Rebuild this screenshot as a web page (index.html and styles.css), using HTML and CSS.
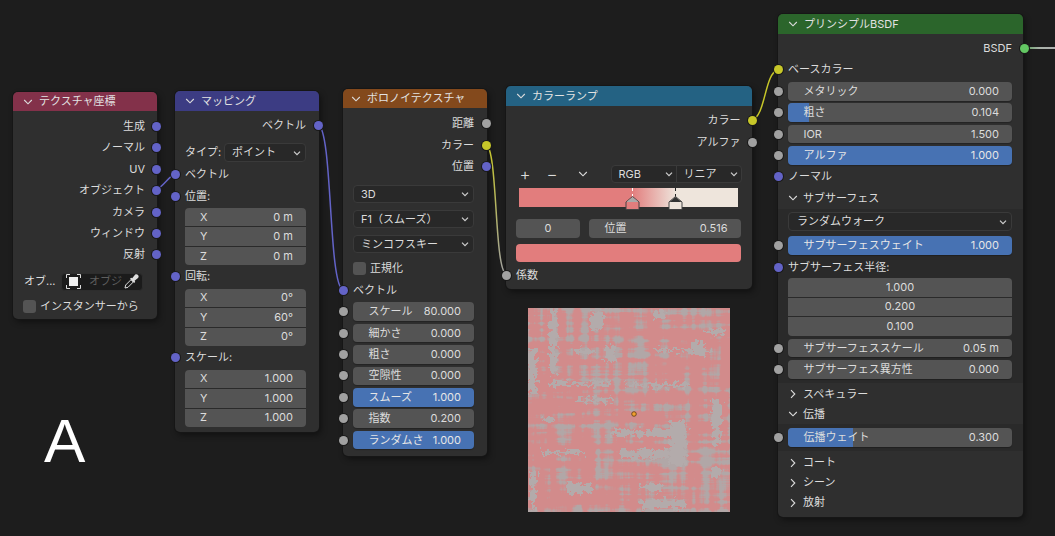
FILE: index.html
```html
<!DOCTYPE html>
<html lang="ja">
<head>
<meta charset="utf-8">
<title>Nodes</title>
<link rel="stylesheet" href="styles.css">
</head>
<body>
<svg width="0" height="0" class="defs">
  <symbol id="chev" viewBox="0 0 10 10"><path d="M1.2 3l3.8 3.8L8.8 3" fill="none" stroke="currentColor" stroke-width="1.1"/></symbol>
  <symbol id="chevr" viewBox="0 0 10 10"><path d="M3 1.2L6.8 5 3 8.8" fill="none" stroke="currentColor" stroke-width="1.1"/></symbol>
  <symbol id="mini" viewBox="0 0 10 10"><path d="M2 3.6l3 3 3-3" fill="none" stroke="currentColor" stroke-width="1.2"/></symbol>
</svg>
<main class="canvas">
  <svg class="wires" width="1055" height="536">
    <defs>
      <linearGradient id="yg" gradientUnits="userSpaceOnUse" x1="486" y1="144" x2="506" y2="274"><stop offset="0" stop-color="#c7c729"/><stop offset="1" stop-color="#a1a1a1"/></linearGradient>
      <linearGradient id="gw" gradientUnits="userSpaceOnUse" x1="1023" y1="48" x2="1055" y2="48"><stop offset="0" stop-color="#63c763"/><stop offset=".5" stop-color="#d8e4d8"/><stop offset="1" stop-color="#e0e0e0"/></linearGradient>
    </defs>
    <path d="M157 189C163 187 169 176 175 174" stroke="#6363c7"/>
    <path d="M318 124.500C333 130 328 284 343 290" stroke="#6363c7"/>
    <path d="M486 144C498 150 494 268 506 274" stroke="url(#yg)"/>
    <path d="M752 120C766 116 764 74 778 69.500" stroke="#c7c729"/>
    <path d="M1023 48H1055" stroke="url(#gw)"/>
  </svg>

  <section class="node n-tex">
    <header class="head h-tex"><svg class="chev"><use href="#chev"/></svg>テクスチャ座標</header>
    <div class="body">
      <div class="row out">生成<i class="sock vec"></i></div>
      <div class="row out">ノーマル<i class="sock vec"></i></div>
      <div class="row out">UV<i class="sock vec"></i></div>
      <div class="row out">オブジェクト<i class="sock vec"></i></div>
      <div class="row out">カメラ<i class="sock vec"></i></div>
      <div class="row out">ウィンドウ<i class="sock vec"></i></div>
      <div class="row out">反射<i class="sock vec"></i></div>
      <div class="objrow">
        <span class="objlabel">オブ...</span>
        <div class="objfield">
          <svg class="objicon" width="15" height="15" viewBox="0 0 15 15"><path d="M.5 4V.5H4M11 .5h3.500V4M14.500 11v3.500H11M4 14.500H.5V11" fill="none" stroke="#ddd"/><rect x="3" y="3" width="9" height="9" fill="#eee"/></svg>
          <span class="objtext">オブジ</span>
          <svg class="dropper" width="15" height="15" viewBox="0 0 15 15"><path d="M1 14l.7-3L7 5.700 9.300 8 4 13.300z" fill="none" stroke="#ddd"/><path d="M6 4.700l1.200-1 1 .6L11 .8c1-.8 2.300-.6 3 .2.800.8.900 2 0 3l-3.400 2.700.6 1-1 1.200z" fill="#ddd"/></svg>
        </div>
      </div>
      <label class="check"><i class="box"></i>インスタンサーから</label>
    </div>
  </section>

  <section class="node n-map">
    <header class="head h-map"><svg class="chev"><use href="#chev"/></svg>マッピング</header>
    <div class="body">
      <div class="row out">ベクトル<i class="sock vec"></i></div>
      <div class="typerow"><span>タイプ:</span><div class="select"><span>ポイント</span><svg class="mini"><use href="#mini"/></svg></div></div>
      <div class="row">ベクトル<i class="sock vec"></i></div>
      <div class="row">位置:<i class="sock vec"></i></div>
      <div class="stack">
        <div class="cell"><span>X</span><span>0 m</span></div>
        <div class="cell"><span>Y</span><span>0 m</span></div>
        <div class="cell"><span>Z</span><span>0 m</span></div>
      </div>
      <div class="row">回転:<i class="sock vec"></i></div>
      <div class="stack">
        <div class="cell"><span>X</span><span>0°</span></div>
        <div class="cell"><span>Y</span><span>60°</span></div>
        <div class="cell"><span>Z</span><span>0°</span></div>
      </div>
      <div class="row">スケール:<i class="sock vec"></i></div>
      <div class="stack">
        <div class="cell"><span>X</span><span>1.000</span></div>
        <div class="cell"><span>Y</span><span>1.000</span></div>
        <div class="cell"><span>Z</span><span>1.000</span></div>
      </div>
    </div>
  </section>

  <section class="node n-vor">
    <header class="head h-vor"><svg class="chev"><use href="#chev"/></svg>ボロノイテクスチャ</header>
    <div class="body">
      <div class="row out">距離<i class="sock val"></i></div>
      <div class="row out">カラー<i class="sock col"></i></div>
      <div class="row out">位置<i class="sock vec"></i></div>
      <div class="selects">
        <div class="select"><span>3D</span><svg class="mini"><use href="#mini"/></svg></div>
        <div class="select"><span>F1（スムーズ）</span><svg class="mini"><use href="#mini"/></svg></div>
        <div class="select"><span>ミンコフスキー</span><svg class="mini"><use href="#mini"/></svg></div>
      </div>
      <label class="check norm"><i class="box"></i>正規化</label>
      <div class="row">ベクトル<i class="sock vec"></i></div>
      <div class="row frow"><i class="sock val"></i><div class="field"><span>スケール</span><span>80.000</span></div></div>
      <div class="row frow"><i class="sock val"></i><div class="field"><span>細かさ</span><span>0.000</span></div></div>
      <div class="row frow"><i class="sock val"></i><div class="field"><span>粗さ</span><span>0.000</span></div></div>
      <div class="row frow"><i class="sock val"></i><div class="field"><span>空隙性</span><span>0.000</span></div></div>
      <div class="row frow"><i class="sock val"></i><div class="field on"><span>スムーズ</span><span>1.000</span></div></div>
      <div class="row frow"><i class="sock val"></i><div class="field"><span>指数</span><span>0.200</span></div></div>
      <div class="row frow"><i class="sock val"></i><div class="field on"><span>ランダムさ</span><span>1.000</span></div></div>
    </div>
  </section>

  <section class="node n-ramp">
    <header class="head h-ramp"><svg class="chev"><use href="#chev"/></svg>カラーランプ</header>
    <div class="body">
      <div class="row out">カラー<i class="sock col"></i></div>
      <div class="row out">アルファ<i class="sock val"></i></div>
      <div class="tools">
        <span class="tool">+</span>
        <span class="tool minus">−</span>
        <svg class="toolchev"><use href="#chev"/></svg>
        <div class="seg">
          <div class="seg1"><span>RGB</span><svg class="mini"><use href="#mini"/></svg></div>
          <div class="seg2"><span>リニア</span><svg class="mini"><use href="#mini"/></svg></div>
        </div>
      </div>
      <div class="ramp">
        <i class="tick t1"></i><i class="tick t2"></i>
        <svg class="handle h1" width="15" height="14" viewBox="0 0 15 14"><path d="M7.500 .5L14 6v7.500H1V6z" fill="#e27d7d" stroke="#444"/><path d="M7.500 1L13.500 6H1.500z" fill="#aaa"/></svg>
        <svg class="handle h2" width="15" height="14" viewBox="0 0 15 14"><path d="M7.500 .5L14 6v7.500H1V6z" fill="#eee5dc" stroke="#444"/><path d="M7.500 1L13.500 6H1.500z" fill="#333"/></svg>
      </div>
      <div class="posrow">
        <div class="idx">0</div>
        <div class="pos"><span>位置</span><span>0.516</span></div>
      </div>
      <div class="swatch"></div>
      <div class="row fac">係数<i class="sock val"></i></div>
    </div>
  </section>

  <section class="node n-bsdf">
    <header class="head h-bsdf"><svg class="chev"><use href="#chev"/></svg>プリンシプルBSDF</header>
    <div class="body nopad">
      <div class="pad">
        <div class="row out">BSDF<i class="sock sha"></i></div>
        <div class="row">ベースカラー<i class="sock col"></i></div>
        <div class="row frow"><i class="sock val"></i><div class="field"><span>メタリック</span><span>0.000</span></div></div>
        <div class="row frow"><i class="sock val"></i><div class="field"><i class="fill" style="width:9.500%"></i><span>粗さ</span><span>0.104</span></div></div>
        <div class="row frow"><i class="sock val"></i><div class="field"><span>IOR</span><span>1.500</span></div></div>
        <div class="row frow"><i class="sock val"></i><div class="field on"><span>アルファ</span><span>1.000</span></div></div>
        <div class="row">ノーマル<i class="sock vec"></i></div>
        <div class="panelhead row"><svg class="pchev"><use href="#chev"/></svg>サブサーフェス</div>
      </div>
      <div class="panel p-sub">
        <div class="select wide"><span>ランダムウォーク</span><svg class="mini"><use href="#mini"/></svg></div>
        <div class="row frow"><i class="sock val"></i><div class="field on"><span>サブサーフェスウェイト</span><span>1.000</span></div></div>
        <div class="row">サブサーフェス半径:<i class="sock vec"></i></div>
        <div class="stack tight">
          <div class="cell mid">1.000</div>
          <div class="cell mid">0.200</div>
          <div class="cell mid">0.100</div>
        </div>
        <div class="row frow"><i class="sock val"></i><div class="field"><span>サブサーフェススケール</span><span>0.05 m</span></div></div>
        <div class="row frow"><i class="sock val"></i><div class="field"><span>サブサーフェス異方性</span><span>0.000</span></div></div>
      </div>
      <div class="pad heads">
        <div class="plain"><svg class="pchev"><use href="#chevr"/></svg>スペキュラー</div>
        <div class="plain"><svg class="pchev"><use href="#chev"/></svg>伝播</div>
      </div>
      <div class="panel p-trans">
        <div class="row frow"><i class="sock val"></i><div class="field"><i class="fill" style="width:29%"></i><span>伝播ウェイト</span><span>0.300</span></div></div>
      </div>
      <div class="pad heads last">
        <div class="plain"><svg class="pchev"><use href="#chevr"/></svg>コート</div>
        <div class="plain"><svg class="pchev"><use href="#chevr"/></svg>シーン</div>
        <div class="plain"><svg class="pchev"><use href="#chevr"/></svg>放射</div>
      </div>
    </div>
  </section>

  <figure class="preview">
    <svg width="202" height="204" viewBox="0 0 202 204">
      <defs>
        <filter id="tex" x="0" y="0" width="100%" height="100%" color-interpolation-filters="sRGB">
          <feTurbulence type="fractalNoise" baseFrequency="0.11 0.01" numOctaves="4" seed="21" result="v"/>
          <feColorMatrix in="v" type="matrix" values="1 0 0 0 0 1 0 0 0 0 1 0 0 0 0 0 0 0 0 1" result="vg"/>
          <feTurbulence type="fractalNoise" baseFrequency="0.01 0.14" numOctaves="4" seed="8" result="h"/>
          <feColorMatrix in="h" type="matrix" values="1 0 0 0 0 1 0 0 0 0 1 0 0 0 0 0 0 0 0 1" result="hg"/>
          <feComposite in="vg" in2="hg" operator="arithmetic" k1="0" k2=".5" k3=".5" k4="0" result="sum"/>
          <feComponentTransfer in="sum" result="mask">
            <feFuncR type="linear" slope="10" intercept="-5.150"/>
            <feFuncG type="linear" slope="10" intercept="-5.150"/>
            <feFuncB type="linear" slope="10" intercept="-5.150"/>
          </feComponentTransfer>
          <feColorMatrix in="mask" type="matrix" values="-0.130 0 0 0 0.825 0 0.110 0 0 0.545 0 0 0.110 0 0.545 0 0 0 0 1"/>
          <feGaussianBlur stdDeviation=".5"/>
        </filter>
        <filter id="fray" x="-5%" y="-5%" width="110%" height="110%" color-interpolation-filters="sRGB">
          <feTurbulence type="fractalNoise" baseFrequency="0.2 0.2" numOctaves="3" seed="4" result="n"/>
          <feDisplacementMap in="SourceGraphic" in2="n" scale="14" xChannelSelector="R" yChannelSelector="G"/>
          <feGaussianBlur stdDeviation=".7"/>
        </filter>
      </defs>
      <rect width="202" height="204" fill="#d58b8b" filter="url(#tex)"/>
      <g class="blotches" filter="url(#fray)">
        <rect x="0" y="42" width="9" height="44"/>
        <rect x="22" y="2" width="7" height="64"/>
        <rect x="62" y="4" width="13" height="18"/>
        <rect x="126" y="3" width="11" height="8"/>
        <rect x="20" y="74" width="60" height="4"/>
        <rect x="100" y="75" width="60" height="4"/>
        <rect x="50" y="90" width="36" height="4"/>
        <rect x="14" y="109" width="13" height="5"/>
        <rect x="82" y="122" width="70" height="6"/>
        <rect x="142" y="112" width="16" height="44"/>
        <rect x="92" y="142" width="56" height="8"/>
        <rect x="12" y="143" width="44" height="3"/>
        <rect x="184" y="92" width="9" height="44"/>
        <rect x="164" y="34" width="13" height="13"/>
        <rect x="124" y="41" width="60" height="3"/>
        <rect x="176" y="22" width="21" height="4"/>
        <rect x="48" y="41" width="20" height="5"/>
        <rect x="78" y="38" width="9" height="16"/>
        <rect x="112" y="192" width="44" height="8"/>
        <rect x="3" y="162" width="5" height="40"/>
        <rect x="114" y="177" width="20" height="6"/>
        <rect x="38" y="175" width="26" height="10"/>
        <rect x="184" y="158" width="8" height="12"/>
      </g>
      <circle cx="106" cy="106" r="2.300" fill="#f0a030" stroke="#5a3a10" stroke-width=".8"/>
    </svg>
  </figure>

  <div class="letter">A</div>
</main>
</body>
</html>
```

FILE: styles.css
```css
* { box-sizing: border-box; }
html, body { margin: 0; padding: 0; }
body {
  background: #1d1d1d;
  font-family: Inter, "Noto Sans CJK JP", "Noto Sans", sans-serif;
  font-size: 11px;
  line-height: 1;
  color: #dcdcdc;
}
.defs { position: absolute; }
.canvas { position: relative; width: 1055px; height: 536px; overflow: hidden; }
.wires { position: absolute; left: 0; top: 0; z-index: 3; pointer-events: none; }
.wires path { fill: none; stroke-width: 1.5; }

.node {
  position: absolute;
  background: #2f2f2f;
  border-radius: 5px;
  box-shadow: 0 0 0 1px #161616, 2px 3px 6px rgba(0, 0, 0, .45);
}
.n-tex { left: 13px; top: 92px; width: 143.500px; height: 227px; }
.n-map { left: 175px; top: 91px; width: 143.500px; height: 341px; }
.n-vor { left: 343px; top: 89px; width: 143.500px; height: 367px; }
.n-ramp { left: 506px; top: 86px; width: 246px; height: 203px; }
.n-bsdf { left: 778px; top: 14px; width: 245px; height: 503px; }

.head {
  display: flex;
  align-items: center;
  height: 20px;
  padding-left: 10px;
  border-radius: 5px 5px 0 0;
  color: #e2e2e2;
  white-space: nowrap;
}
.h-tex { background: #83314a; height: 19px; }
.h-map { background: #3c3c83; }
.h-vor { background: #83491c; height: 19px; padding-left: 8px; }
.h-ramp { background: #246283; }
.h-bsdf { background: #2b652b; }
.chev { width: 10px; height: 10px; margin-right: 6px; color: #dcdcdc; flex: none; }

.body { padding: 4.300px 12.500px 0 10px; }
.n-tex .body { padding-top: 4.800px; padding-right: 11.500px; }
.n-vor .body { padding-top: 5.300px; }
.n-ramp .body { padding-right: 11.500px; }
.nopad, .n-bsdf .nopad { padding: 0; }
.pad { padding: 3.800px 11px 0 10px; }
.row {
  position: relative;
  display: flex;
  align-items: center;
  height: 21.400px;
  white-space: nowrap;
}
.out { justify-content: flex-end; }
.sock {
  position: absolute;
  top: 50%;
  left: -10px;
  width: 9px;
  height: 9px;
  margin: -4.500px 0 0 -4.500px;
  border-radius: 50%;
  box-shadow: 0 0 0 1px #1a1a1a;
  z-index: 4;
}
.out .sock { left: auto; right: -16.500px; }
.n-tex .out .sock { right: -16px; }
.n-map .out .sock, .n-vor .out .sock { right: -17px; }
.n-ramp .out .sock { right: -16.500px; }
.vec { background: #6363c7; }
.val { background: #a1a1a1; }
.col { background: #c7c729; }
.sha { background: #63c763; }

.objrow { display: flex; align-items: center; height: 18px; margin-top: 7px; }
.objlabel { width: 40px; padding-left: 1px; flex: none; }
.objfield {
  display: flex;
  align-items: center;
  width: 82px;
  height: 18px;
  padding: 0 3px 0 4px;
  background: #1b1b1b;
  border: 1px solid #2d2d2d;
  border-radius: 4px;
  margin-left: -2px;
}
.objtext { color: #5e5e5e; margin-left: 8px; flex: 1; white-space: nowrap; }
.objicon, .dropper { flex: none; }
.check { display: flex; align-items: center; height: 14px; margin-top: 8.500px; white-space: nowrap; }
.box {
  width: 13px;
  height: 13px;
  margin-right: 4px;
  background: #545454;
  border-radius: 3px;
  flex: none;
}
.norm { margin-top: 8px; height: 14px; margin-bottom: 4.200px; }

.typerow { display: flex; align-items: center; justify-content: space-between; height: 18px; margin: 7px 0 2.300px; }
.select {
  display: flex;
  align-items: center;
  justify-content: space-between;
  height: 18.500px;
  padding: 0 3px 0 7px;
  background: #282828;
  border: 1px solid #3a3a3a;
  border-radius: 4px;
  white-space: nowrap;
}
.typerow .select { width: 82px; }
.mini { width: 10px; height: 10px; flex: none; color: #cfcfcf; }
.selects { display: flex; flex-direction: column; gap: 6.500px; margin: 7.500px 0 0; }

.stack { margin: 1px 0; border-radius: 4px; overflow: hidden; display: flex; flex-direction: column; gap: 1px; background: #2a2a2a; }
.tight { margin: .5px 0 1.800px; }
.cell {
  display: flex;
  justify-content: space-between;
  align-items: center;
  height: 18.500px;
  padding: 0 13px 0 15px;
  background: #545454;
}
.mid { justify-content: center; padding: 0; }

.field {
  position: relative;
  display: flex;
  flex: 1;
  min-width: 0;
  justify-content: space-between;
  align-items: center;
  height: 18.500px;
  padding: 0 13px 0 15.500px;
  background: #545454;
  border-radius: 4px;
  overflow: hidden;
  white-space: nowrap;
  box-shadow: 0 1px 1px rgba(0, 0, 0, .25);
}
.field span { position: relative; }
.on { background: #4772b3; color: #e6e6e6; }
.fill { position: absolute; left: 0; top: 0; bottom: 0; background: #4772b3; }

.tools { display: flex; align-items: center; height: 18px; margin: 12px 0 0 0; }
.tool { width: 18px; text-align: center; font-size: 17px; font-weight: 300; color: #dcdcdc; flex: none; }
.minus { margin-left: 9px; }
.toolchev { width: 10px; height: 10px; margin: 0 0 0 17px; color: #dcdcdc; flex: none; }
.seg {
  display: flex;
  margin-left: auto;
  margin-right: -1px;
  width: 131px;
  height: 18px;
  background: #282828;
  border: 1px solid #3a3a3a;
  border-radius: 4px;
}
.seg1, .seg2 { display: flex; flex: 1; align-items: center; justify-content: space-between; padding: 0 2px 0 7px; }
.seg2 { border-left: 1px solid #3a3a3a; }
.ramp {
  position: relative;
  height: 19px;
  width: 219px;
  margin: 5px 0 0 3px;
  background: linear-gradient(to right, #e27d7d 51.600%, #eee5dc 71.700%);
}
.tick {
  position: absolute;
  top: 0;
  width: 0;
  height: 9px;
  border-left: 1px dashed #222;
}
.t1 { left: 113px; border-left-color: #fff; }
.t2 { left: 156px; }
.handle { position: absolute; top: 8px; z-index: 2; }
.h1 { left: 106px; }
.h2 { left: 149px; }
.posrow { display: flex; justify-content: space-between; margin-top: 11.500px; height: 19px; }
.idx, .pos {
  display: flex;
  align-items: center;
  background: #545454;
  border-radius: 4px;
}
.idx { width: 64px; justify-content: center; }
.pos { width: 152px; justify-content: space-between; padding: 0 13px 0 16px; }
.swatch { height: 18.500px; margin-top: 6px; background: #e27d7d; border-radius: 4px; }
.fac { margin-top: 3px; }

.pchev { width: 10px; height: 10px; margin-right: 5px; flex: none; color: #dcdcdc; }
.panel { background: #2a2a2a; padding: 0 11px 0 10px; }
.p-sub { height: 174.500px; padding-top: 3.500px; }
.wide { margin-bottom: 4px; padding-left: 8px; }
.p-trans { height: 26.800px; padding-top: 2.500px; }
.plain { display: flex; align-items: center; height: 20px; white-space: nowrap; }
.heads { padding-top: 1px; height: 41px; }
.last { height: auto; padding-top: 1.500px; }

.preview { position: absolute; left: 528px; top: 308px; width: 202px; height: 204px; margin: 0; }
.preview svg { display: block; }
.blotches { fill: #b3abab; }
.letter {
  position: absolute;
  left: 44px;
  top: 405px;
  font-family: "Liberation Sans", sans-serif;
  font-size: 62px;
  line-height: 72px;
  color: #fff;
}
```
